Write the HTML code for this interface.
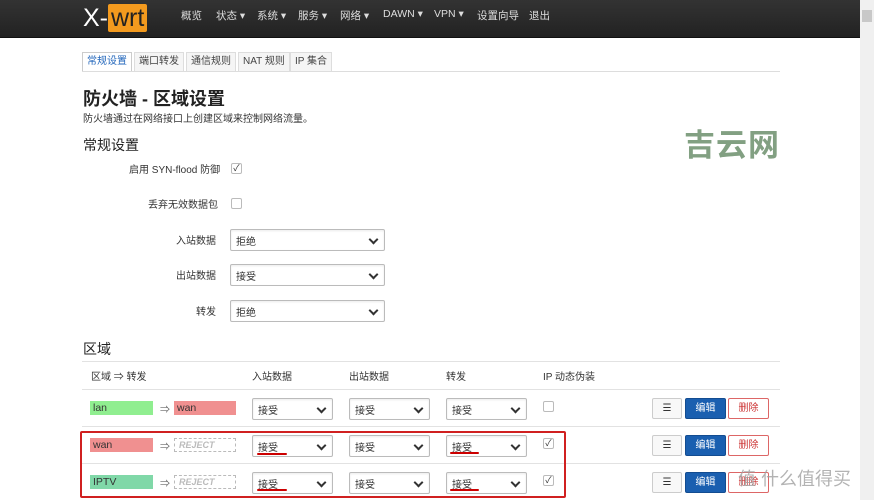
<!DOCTYPE html>
<html><head><meta charset="utf-8"><style>
*{box-sizing:border-box;margin:0;padding:0}
body{width:874px;height:500px;overflow:hidden;background:#fff;font-family:"Liberation Sans","Noto Sans CJK SC",sans-serif;color:#333;position:relative;font-size:11px}
.hdr{position:absolute;left:0;top:0;width:860px;height:38px;background:linear-gradient(#333,#222);border-bottom:1px solid #111}
.logo{position:absolute;left:83px;top:3px;color:#fff;font-size:25px;line-height:30px}
.logo span{background:#f39a1e;color:#222;padding:0 3px;border-radius:2px}
.nav{position:absolute;top:8px;font-size:10.5px;color:#ddd}
.sb{position:absolute;left:860px;top:0;width:14px;height:500px;background:#f0f0f0}
.sb div{position:absolute;left:2px;top:10px;width:10px;height:12px;background:#c8c8c8}
.tabs{position:absolute;left:82px;top:52px;width:698px;height:20px;border-bottom:1px solid #ddd}
.tab{position:absolute;top:0;height:19px;border:1px solid #ddd;border-bottom:none;background:#f5f5f5;font-size:10px;line-height:17px;padding:0 4px;color:#444}
.t{position:absolute;white-space:nowrap}
.sel,.zone,.rej{display:flex;align-items:center}
.sel{position:absolute;height:22px;border:1px solid #bbb;border-radius:2px;background:#fff;font-size:10px;padding-left:5px;box-shadow:inset 0 1px 2px rgba(0,0,0,.08)}
.sel:after{content:"";position:absolute;right:7px;top:6px;width:5px;height:5px;border-right:2px solid #333;border-bottom:2px solid #333;transform:rotate(45deg)}
.cb{position:absolute;width:11px;height:11px;border:1px solid #bbb;border-radius:2px;background:#fff;font-size:9px;line-height:9px;text-align:center;color:#333}
.line{position:absolute;left:82px;width:698px;height:1px;background:#e2e2e2}
.zone{position:absolute;height:14px;font-size:10.5px;padding-left:3px;color:#333}
.rej{position:absolute;height:14px;border:1px dashed #bbb;font-size:9px;font-style:italic;color:#bbb;padding-left:4px;font-weight:bold}
.btn{position:absolute;height:21px;border-radius:2px;font-size:10px;text-align:center;line-height:19px}
.u{position:absolute;height:2px;background:#c00;border-radius:1px}
</style></head><body>
<div class="hdr">
<div class="logo">X-<span>wrt</span></div>
<div class="nav" style="left:181px">概览</div>
<div class="nav" style="left:216px">状态 ▾</div>
<div class="nav" style="left:257px">系统 ▾</div>
<div class="nav" style="left:298px">服务 ▾</div>
<div class="nav" style="left:340px">网络 ▾</div>
<div class="nav" style="left:383px">DAWN ▾</div>
<div class="nav" style="left:434px">VPN ▾</div>
<div class="nav" style="left:477px">设置向导</div>
<div class="nav" style="left:529px">退出</div>
</div>
<div class="sb"><div></div></div>
<div class="tabs">
<div class="tab" style="left:0;background:#fff;color:#2266bb;border-color:#ccc">常规设置</div>
<div class="tab" style="left:52px">端口转发</div>
<div class="tab" style="left:104px">通信规则</div>
<div class="tab" style="left:156px">NAT 规则</div>
<div class="tab" style="left:208px">IP 集合</div>
</div>
<div class="t" style="left:83px;top:85px;font-size:18px;font-weight:bold;color:#222">防火墙 - 区域设置</div>
<div class="t" style="left:83px;top:110px;font-size:10px">防火墙通过在网络接口上创建区域来控制网络流量。</div>
<div class="t" style="left:684px;top:120px;font-size:31px;color:#82a082;font-weight:bold;letter-spacing:1px">吉云网</div>
<div class="t" style="left:83px;top:135px;font-size:14px;color:#222">常规设置</div>
<div class="t" style="left:129px;top:161px;font-size:10px">启用 SYN-flood 防御</div><div class="cb" style="left:231px;top:163px">✓</div>
<div class="t" style="left:148px;top:196px;font-size:10px">丢弃无效数据包</div><div class="cb" style="left:231px;top:198px"></div>
<div class="t" style="left:176px;top:232px;font-size:10px">入站数据</div><div class="sel" style="left:230px;top:229px;width:155px">拒绝</div>
<div class="t" style="left:176px;top:267px;font-size:10px">出站数据</div><div class="sel" style="left:230px;top:264px;width:155px">接受</div>
<div class="t" style="left:196px;top:303px;font-size:10px">转发</div><div class="sel" style="left:230px;top:300px;width:155px">拒绝</div>
<div class="t" style="left:83px;top:339px;font-size:14px;color:#222">区域</div>
<div class="line" style="top:361px"></div>
<div class="t" style="left:91px;top:368px;font-size:10px">区域 ⇒ 转发</div>
<div class="t" style="left:252px;top:368px;font-size:10px">入站数据</div>
<div class="t" style="left:349px;top:368px;font-size:10px">出站数据</div>
<div class="t" style="left:446px;top:368px;font-size:10px">转发</div>
<div class="t" style="left:543px;top:368px;font-size:10px">IP 动态伪装</div>
<div class="line" style="top:389px"></div>
<div class="line" style="top:426px"></div>
<div class="line" style="top:463px"></div>

<div class="zone" style="left:90px;top:401px;width:63px;background:#90ee90">lan</div>
<div class="t" style="left:160px;top:401px;font-size:10px;color:#666">⇒</div>
<div class="zone" style="left:174px;top:401px;width:62px;background:#f09090">wan</div>
<div class="sel" style="left:252px;top:398px;width:81px">接受</div>
<div class="sel" style="left:349px;top:398px;width:81px">接受</div>
<div class="sel" style="left:446px;top:398px;width:81px">接受</div>
<div class="cb" style="left:543px;top:401px"></div>

<div class="zone" style="left:90px;top:438px;width:63px;background:#f09090">wan</div>
<div class="t" style="left:160px;top:438px;font-size:10px;color:#666">⇒</div>
<div class="rej" style="left:174px;top:438px;width:62px">REJECT</div>
<div class="sel" style="left:252px;top:435px;width:81px">接受</div>
<div class="sel" style="left:349px;top:435px;width:81px">接受</div>
<div class="sel" style="left:446px;top:435px;width:81px">接受</div>
<div class="cb" style="left:543px;top:438px">✓</div>

<div class="zone" style="left:90px;top:475px;width:63px;background:#80d8a8">IPTV</div>
<div class="t" style="left:160px;top:475px;font-size:10px;color:#666">⇒</div>
<div class="rej" style="left:174px;top:475px;width:62px">REJECT</div>
<div class="sel" style="left:252px;top:472px;width:81px">接受</div>
<div class="sel" style="left:349px;top:472px;width:81px">接受</div>
<div class="sel" style="left:446px;top:472px;width:81px">接受</div>
<div class="cb" style="left:543px;top:475px">✓</div>

<div class="u" style="left:257px;top:453px;width:30px"></div>
<div class="u" style="left:450px;top:452px;width:29px"></div>
<div class="u" style="left:257px;top:489px;width:30px"></div>
<div class="u" style="left:450px;top:489px;width:29px"></div>
<div style="position:absolute;left:80px;top:431px;width:486px;height:67px;border:2px solid #d02020;border-radius:2px"></div>

<div class="btn" style="left:652px;top:398px;width:30px;border:1px solid #ccc;background:#f8f8f8">☰</div>
<div class="btn" style="left:685px;top:398px;width:41px;background:#1a5fb0;color:#fff;border:1px solid #134c90">编辑</div>
<div class="btn" style="left:728px;top:398px;width:41px;border:1px solid #d66;color:#c33;background:#fff">删除</div>
<div class="btn" style="left:652px;top:435px;width:30px;border:1px solid #ccc;background:#f8f8f8">☰</div>
<div class="btn" style="left:685px;top:435px;width:41px;background:#1a5fb0;color:#fff;border:1px solid #134c90">编辑</div>
<div class="btn" style="left:728px;top:435px;width:41px;border:1px solid #d66;color:#c33;background:#fff">删除</div>
<div class="btn" style="left:652px;top:472px;width:30px;border:1px solid #ccc;background:#f8f8f8">☰</div>
<div class="btn" style="left:685px;top:472px;width:41px;background:#1a5fb0;color:#fff;border:1px solid #134c90">编辑</div>
<div class="btn" style="left:728px;top:472px;width:41px;border:1px solid #d66;color:#c33;background:#fff">删除</div>
<div class="t" style="left:738px;top:465px;font-size:18px;color:rgba(160,160,160,.8)">值 什么值得买</div>
</body></html>
